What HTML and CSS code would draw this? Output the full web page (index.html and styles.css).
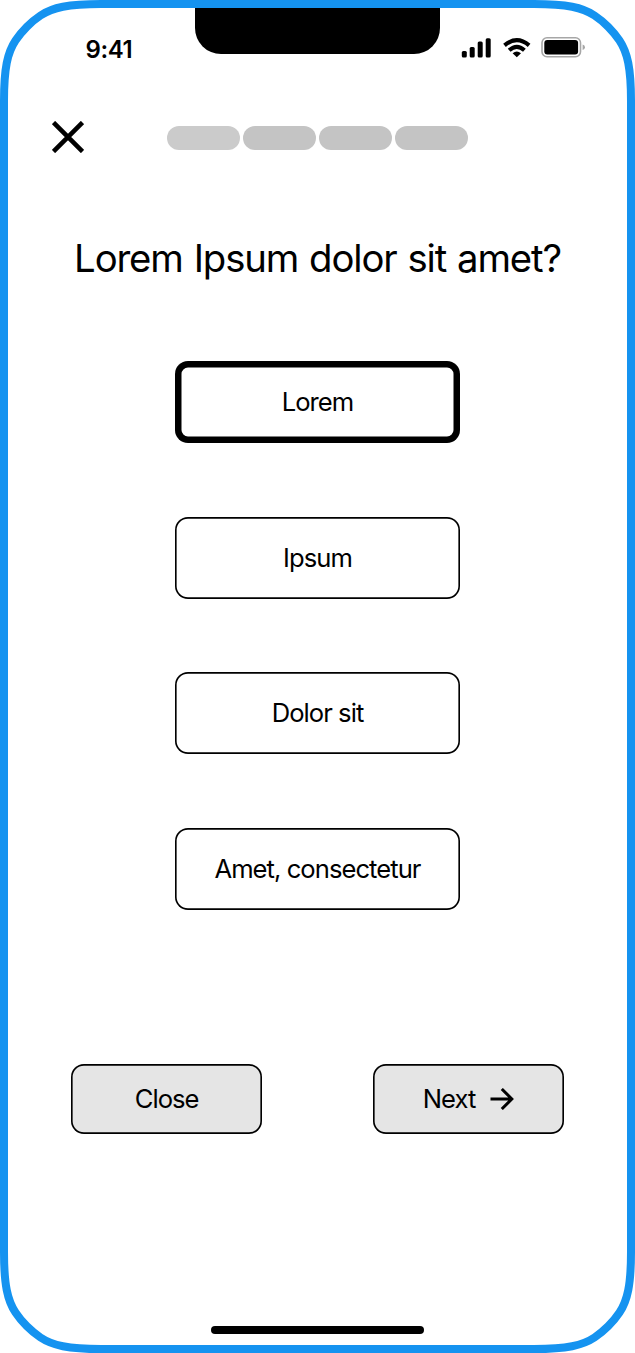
FILE: index.html
```html
<!DOCTYPE html>
<html lang="en">
<head>
<meta charset="utf-8">
<title>Question</title>
<link rel="stylesheet" href="styles.css">
</head>
<body>
<div class="phone">
  <svg class="frame" viewBox="0 0 635 1353" aria-hidden="true">
    <path d="M101 4H534C567 4 582.5 7.5 594.500 15.500C599 18.500 603.900 22.500 608.200 26.800C612.500 31.100 616.500 36 619.500 40.500C627.500 52.500 631 68 631 101V1252C631 1285 627.500 1300.500 619.500 1312.500C616.500 1317 612.500 1321.900 608.200 1326.200C603.900 1330.500 599 1334.500 594.500 1337.500C582.500 1345.500 567 1349 534 1349H101C68 1349 52.500 1345.500 40.500 1337.500C36 1334.500 31.100 1330.500 26.800 1326.200C22.500 1321.900 18.500 1317 15.500 1312.500C7.500 1300.500 4 1285 4 1252V101C4 68 7.500 52.500 15.500 40.500C18.500 36 22.500 31.100 26.800 26.800C31.100 22.500 36 18.500 40.500 15.500C52.500 7.500 68 4 101 4Z"/>
  </svg>
  <header class="status">
    <span class="time">9:41</span>
    <span class="notch"></span>
    <svg class="indicators" width="124" height="22" viewBox="0 0 124 22">
      <rect x="0.8" y="14" width="5" height="6.5" rx="1.5"/>
      <rect x="8.7" y="10" width="5" height="10.500" rx="1.500"/>
      <rect x="16.7" y="4.500" width="5" height="16" rx="1.500"/>
      <rect x="24.700" y="1.300" width="5" height="19.200" rx="1.500"/>
      <g class="waves">
        <path d="M43.500 8.400Q55.800 -2 68.100 8.400"/>
        <path d="M48.200 13.300Q55.800 6.600 63.400 13.300"/>
      </g>
      <path d="M51.600 16.200Q55.800 12.600 60 16.200L55.800 20.200Z"/>
      <rect class="battery" x="81" y="0.800" width="38.500" height="18.900" rx="5"/>
      <rect x="83.300" y="3" width="33.800" height="14.500" rx="3"/>
      <path class="cap" d="M121.600 7.500Q124 8.300 124 10.200T121.600 13Z"/>
    </svg>
  </header>
  <nav class="toolbar">
    <svg class="dismiss" width="32" height="32" viewBox="0 0 32 32"><path d="M1.500 1.500L30.500 30.500M30.500 1.500L1.500 30.500"/></svg>
    <div class="progress"><i class="step current"></i><i class="step"></i><i class="step"></i><i class="step"></i></div>
  </nav>
  <h1 class="question"><span>Lorem Ipsum dolor sit amet?</span></h1>
  <main class="options">
    <button class="box option selected"><span>Lorem</span></button>
    <button class="box option"><span>Ipsum</span></button>
    <button class="box option"><span>Dolor sit</span></button>
    <button class="box option"><span>Amet, consectetur</span></button>
  </main>
  <div class="actions">
    <button class="box action">Close</button>
    <button class="box action">Next
      <svg class="arrow" width="24" height="22" viewBox="0 0 24 22"><path d="M0.500 11H22M11.800 1L21.800 11L11.800 21"/></svg>
    </button>
  </div>
  <div class="home"></div>
</div>
</body>
</html>
```
FILE: styles.css
```css
* { box-sizing: border-box; }
body { margin: 0; background: #fff; color: #000; font-family: Inter, "Liberation Sans", sans-serif; }
.phone { position: relative; width: 635px; height: 1353px; padding: 8px; display: flex; flex-direction: column; overflow: hidden; }
.frame { position: absolute; inset: 0; width: 635px; height: 1353px; pointer-events: none; }
.frame path { fill: none; stroke: #1593f0; stroke-width: 8; }
.status { display: grid; grid-template-columns: 187px 245px 187px; height: 46px; }
.time { padding: 27px 0 0 77.500px; font-size: 24px; line-height: 30px; font-weight: 600; letter-spacing: -0.4px; }
.notch { height: 46px; background: #000; border-radius: 0 0 26px 26px; }
.indicators { margin: 29px 0 0 21px; }
.waves path { fill: none; stroke: #000; stroke-width: 4.1; }
.battery { fill: none; stroke: #a6a6a6; stroke-width: 1.6; }
.cap { fill: #a6a6a6; }
.toolbar { display: flex; align-items: center; height: 32px; margin-top: 67px; padding-left: 44px; }
.dismiss path { fill: none; stroke: #000; stroke-width: 4.6; }
.progress { display: flex; gap: 3px; margin-left: 82.5px; padding-top: 1px; }
.step { width: 73.1px; height: 24px; border-radius: 12px; background: #c4c4c4; }
.step.current { background: #cbcbcb; }
.question { margin: 81px 0 1px; height: 48px; font-size: 38.300px; line-height: 48px; font-weight: 400; letter-spacing: -1.130px; word-spacing: 1.300px; text-align: center; white-space: nowrap; }
.options { display: flex; flex-direction: column; align-items: center; gap: 73.670px; margin-top: 78.100px; }
.box { display: flex; align-items: center; justify-content: center; margin: 0; padding: 0; border: 0; border-radius: 13px; background: #fff; box-shadow: inset 0 0 0 1.630px #000; color: #000; font: 400 25.600px/32px Inter, "Liberation Sans", sans-serif; letter-spacing: -0.95px; white-space: nowrap; }
.option { width: 285.700px; height: 82px; }
.selected { box-shadow: inset 0 0 0 6.500px #000; }
.actions { display: flex; justify-content: space-between; margin-top: 153.900px; padding: 0 63.300px; }
.action { width: 190.700px; height: 69.700px; background: #e5e5e5; gap: 14.500px; }
.arrow path { fill: none; stroke: #000; stroke-width: 3; }
.home { width: 213px; height: 8px; margin: auto auto 11px; border-radius: 4px; background: #000; }
```
